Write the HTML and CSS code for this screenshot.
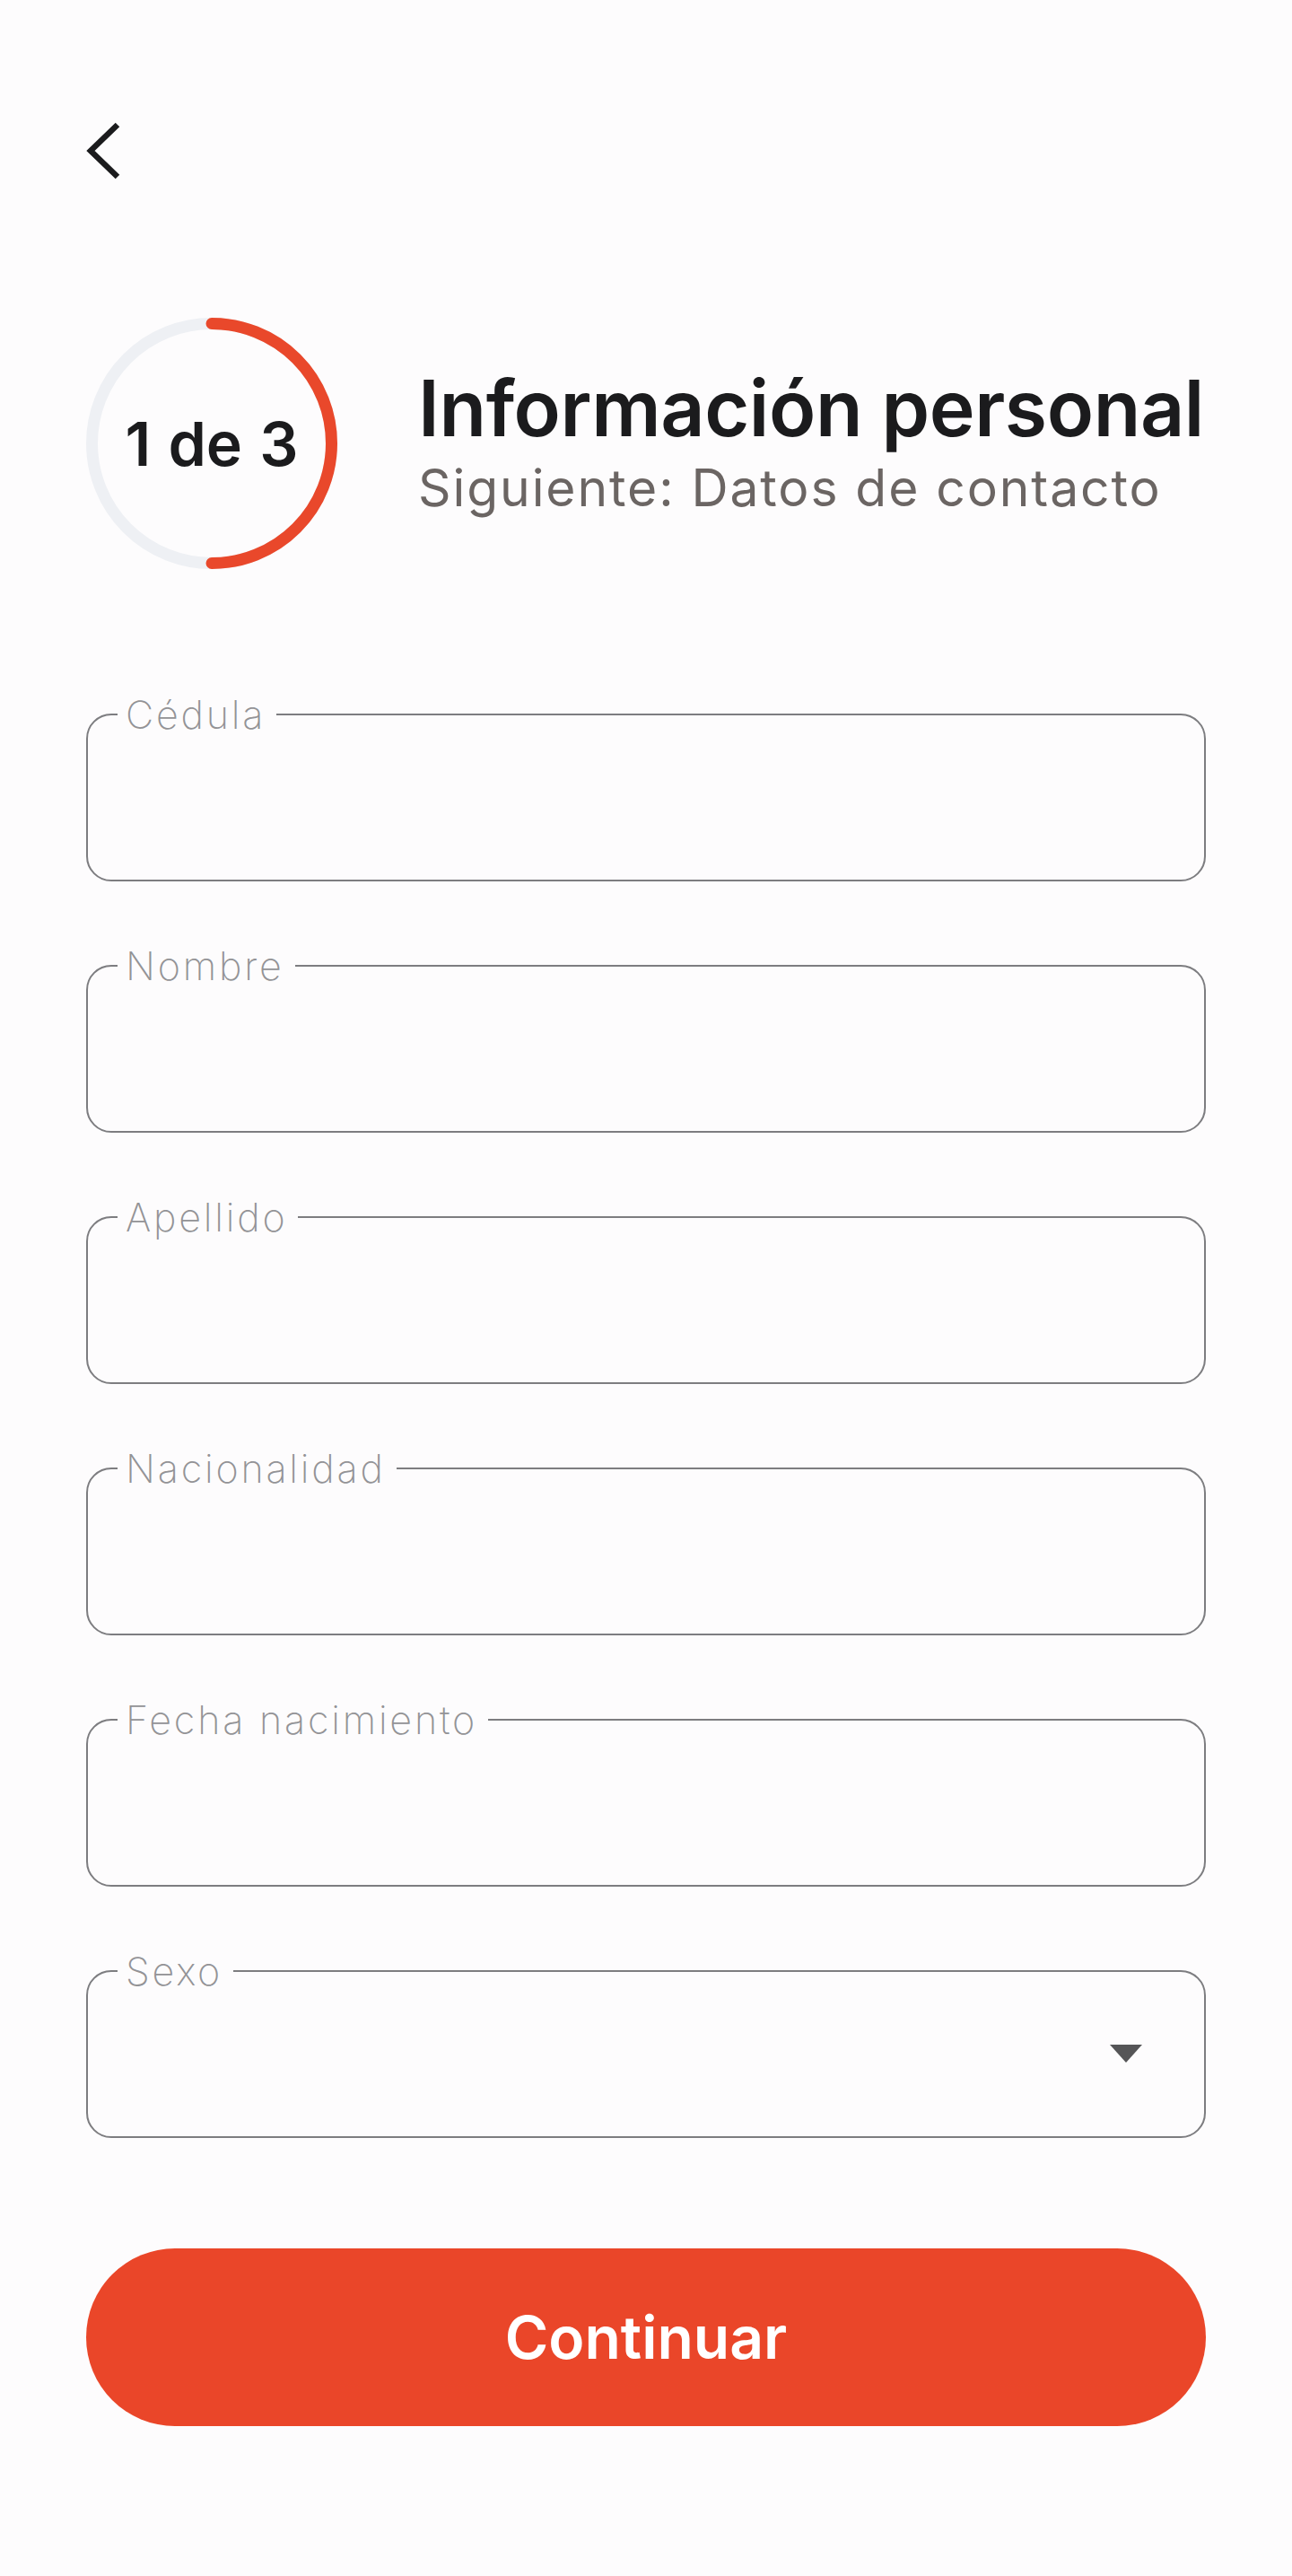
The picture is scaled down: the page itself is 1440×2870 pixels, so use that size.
FILE: index.html
```html
<!DOCTYPE html>
<html lang="es">
<head>
    <meta charset="UTF-8">
    <meta name="viewport" content="width=device-width, initial-scale=1.0">
    <title>Información personal</title>
    <link rel="stylesheet" href="styles.css">
</head>
<body>
    <div class="page">
        <button class="back" type="button" aria-label="Volver">
            <svg width="40" height="64" viewBox="0 0 40 64">
                <polyline points="35,3 5,32 35,61" fill="none" stroke="#1b1b1d" stroke-width="6.5" stroke-linecap="butt" stroke-linejoin="miter"/>
            </svg>
        </button>

        <div class="progress">
            <div class="ring">
                <svg width="280" height="280" viewBox="0 0 280 280">
                    <circle cx="140" cy="140" r="133.5" fill="none" stroke="#eef0f4" stroke-width="13"/>
                    <path d="M140 6.5 A133.5 133.5 0 0 1 140 273.5" fill="none" stroke="#e9482b" stroke-width="13" stroke-linecap="round"/>
                </svg>
                <span class="ring-text">1 de 3</span>
            </div>
            <div class="progress-info">
                <h1 class="title">Información personal</h1>
                <p class="next">Siguiente: Datos de contacto</p>
            </div>
        </div>

        <form class="form">
            <fieldset class="field">
                <legend>Cédula</legend>
                <input type="text" name="cedula">
            </fieldset>
            <fieldset class="field">
                <legend>Nombre</legend>
                <input type="text" name="nombre">
            </fieldset>
            <fieldset class="field">
                <legend>Apellido</legend>
                <input type="text" name="apellido">
            </fieldset>
            <fieldset class="field">
                <legend>Nacionalidad</legend>
                <input type="text" name="nacionalidad">
            </fieldset>
            <fieldset class="field">
                <legend>Fecha nacimiento</legend>
                <input type="text" name="fecha">
            </fieldset>
            <fieldset class="field">
                <legend>Sexo</legend>
                <div class="select">
                    <svg width="36" height="20" viewBox="0 0 36 20">
                        <polygon points="0,0 36,0 18,20" fill="#555557"/>
                    </svg>
                </div>
            </fieldset>

            <button class="submit" type="button">Continuar</button>
        </form>
    </div>
</body>
</html>
```

FILE: styles.css
```css
:root {
    --accent: #ea4629;
    --text: #1b1b1d;
    --muted: #6b6563;
    --line: #7d7d80;
    --label: #939396;
    --bg: #fdfcfd;
}

* {
    box-sizing: border-box;
}

body {
    margin: 0;
    background: var(--bg);
    font-family: Inter, "Noto Sans", sans-serif;
    color: var(--text);
}

.page {
    padding: 136px 96px 0;
}

.back {
    display: block;
    margin: 0;
    padding: 0;
    border: 0;
    background: none;
    height: 64px;
}

.progress {
    display: flex;
    align-items: center;
    gap: 90px;
    margin-top: 154px;
}

.ring {
    display: grid;
    place-items: center;
    width: 280px;
    height: 280px;
    flex-shrink: 0;
}

.ring svg,
.ring-text {
    grid-area: 1 / 1;
}

.ring-text {
    font-size: 68px;
    font-weight: 600;
    word-spacing: 2px;
}

.title {
    margin: 0;
    font-size: 86px;
    font-weight: 600;
    line-height: 1.08;
    letter-spacing: -0.4px;
}

.next {
    margin: 8px 0 0;
    font-size: 57px;
    line-height: 1.2;
    color: var(--muted);
    letter-spacing: 1.9px;
}

.form {
    display: flex;
    flex-direction: column;
    gap: 73px;
    margin-top: 141px;
}

.field {
    margin: 0;
    padding: 0 33px 0 33px;
    border: 2px solid var(--line);
    border-radius: 28px;
    min-width: 0;
}

.field legend {
    padding: 0 12px 0 9px;
    font-size: 43px;
    line-height: 42px;
    font-weight: 200;
    color: var(--label);
    letter-spacing: 2.8px;
}

.field input {
    display: block;
    width: 100%;
    height: 163px;
    border: 0;
    background: transparent;
    font: inherit;
    font-size: 48px;
    outline: none;
}

.select {
    display: flex;
    justify-content: flex-end;
    align-items: center;
    height: 163px;
    padding: 0 36px 22px 0;
}

.submit {
    margin-top: 50px;
    height: 198px;
    border: 0;
    border-radius: 99px;
    background: var(--accent);
    color: #fff;
    font-family: Inter, "Noto Sans", sans-serif;
    font-size: 66px;
    font-weight: 600;
}
```
